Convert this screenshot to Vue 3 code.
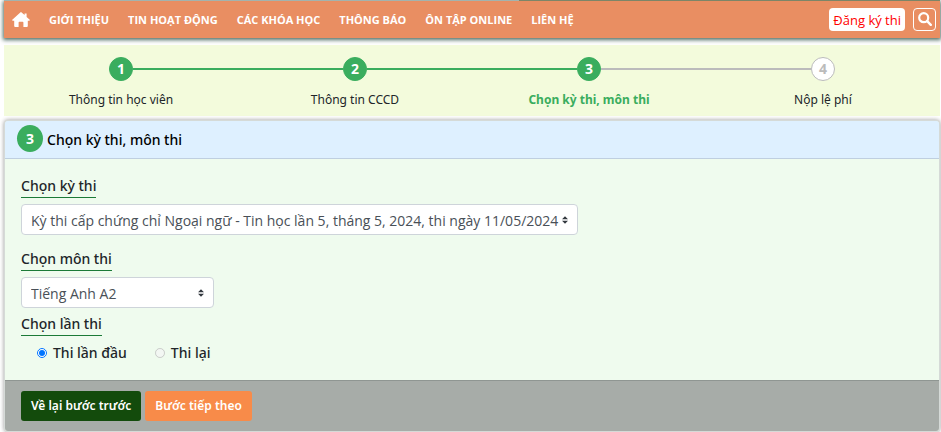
<script setup>
import { ref } from 'vue'

const links = ['GIỚI THIỆU', 'TIN HOẠT ĐỘNG', 'CÁC KHÓA HỌC', 'THÔNG BÁO', 'ÔN TẬP ONLINE', 'LIÊN HỆ']

const steps = [
  { label: 'Thông tin học viên', state: 'done' },
  { label: 'Thông tin CCCD', state: 'done' },
  { label: 'Chọn kỳ thi, môn thi', state: 'current' },
  { label: 'Nộp lệ phí', state: 'todo' },
]

const exams = ['Kỳ thi cấp chứng chỉ Ngoại ngữ - Tin học lần 5, tháng 5, 2024, thi ngày 11/05/2024']
const subjects = ['Tiếng Anh A2']
const exam = ref(exams[0])
const subject = ref(subjects[0])
const attempt = ref('first')
</script>

<template>
  <div class="page">
    <div class="banner"><span class="banner-photo"></span></div>

    <nav class="navbar">
      <a class="home" href="#" aria-label="Trang chủ">
        <svg viewBox="0 0 18 15" width="18" height="15" aria-hidden="true">
          <path fill="#fff" d="M9 0 L12.6 3.1 V1.6 H14.6 V4.9 L18 8 L17.3 8.8 H15.8 V14 Q15.8 15 14.8 15 H11.4 V10.6 Q11.4 9.8 10.6 9.8 H7.4 Q6.6 9.8 6.6 10.6 V15 H3.2 Q2.2 15 2.2 14 V8.8 H.7 L0 8 L8.3 .4 Q8.7 0 9 0 Z" />
        </svg>
      </a>
      <a v-for="link in links" :key="link" class="nav-link" href="#">{{ link }}</a>
      <a class="register" href="#">Đăng ký thi</a>
      <button class="search" type="button" aria-label="Tìm kiếm">
        <svg viewBox="0 0 14 14" width="14" height="14" aria-hidden="true">
          <circle cx="5.7" cy="5.7" r="4.5" fill="none" stroke="#fff" stroke-width="2.2" />
          <path d="M9.2 9.2 L12.8 12.8" stroke="#fff" stroke-width="2.4" stroke-linecap="round" />
        </svg>
      </button>
    </nav>

    <ol class="steps">
      <li v-for="(step, i) in steps" :key="step.label" class="step" :class="step.state">
        <div class="track">
          <span class="line"></span>
          <span class="dot">{{ i + 1 }}</span>
          <span class="line"></span>
        </div>
        <span class="step-label">{{ step.label }}</span>
      </li>
    </ol>

    <form class="card" @submit.prevent>
      <header class="card-header">
        <span class="badge">3</span>
        <h1 class="title">Chọn kỳ thi, môn thi</h1>
      </header>

      <div class="card-body">
        <label class="field-label" for="exam">Chọn kỳ thi</label>
        <select id="exam" v-model="exam" class="select exam">
          <option v-for="item in exams" :key="item">{{ item }}</option>
        </select>

        <label class="field-label" for="subject">Chọn môn thi</label>
        <select id="subject" v-model="subject" class="select subject">
          <option v-for="item in subjects" :key="item">{{ item }}</option>
        </select>

        <span id="attempt-label" class="field-label">Chọn lần thi</span>
        <div class="radios" role="radiogroup" aria-labelledby="attempt-label">
          <label class="radio"><input v-model="attempt" type="radio" name="attempt" value="first">Thi lần đầu</label>
          <label class="radio"><input v-model="attempt" type="radio" name="attempt" value="retake" disabled>Thi lại</label>
        </div>
      </div>

      <footer class="card-footer">
        <button class="btn back" type="button">Về lại bước trước</button>
        <button class="btn next" type="submit">Bước tiếp theo</button>
      </footer>
    </form>
  </div>
</template>

<style>
body {
  background: #fff;
  overflow-x: hidden;
}
</style>

<style scoped>
.page {
  padding: 0 1px 0 4px;
  font-family: "Open Sans", "Noto Sans", sans-serif;
  font-size: 14px;
  line-height: 20px;
  color: #212529;
}

.banner {
  position: relative;
  z-index: 1;
  display: flex;
  justify-content: flex-end;
  height: 1px;
  background: #a3b3ae;
}

.banner-photo {
  width: 45%;
  background: #7c8568;
}

.navbar {
  display: flex;
  align-items: center;
  height: 37px;
  padding: 0 4px 0 8px;
  background: #e98e62;
  box-shadow: 0 1px 4px 1px #4f6e64;
}

.home {
  display: flex;
  margin-right: 9px;
}

.nav-link {
  padding: 0 9px 0 10px;
  font-size: 11px;
  font-weight: 700;
  color: #fff;
  text-decoration: none;
  white-space: nowrap;
}

.register {
  margin-left: auto;
  margin-right: 8px;
  padding: 1px 4px 0;
  border-radius: 4px;
  background: #fff;
  color: #f00;
  font-size: 13px;
  line-height: 22px;
  text-decoration: none;
}

.search {
  display: flex;
  justify-content: center;
  width: 23px;
  height: 23px;
  padding: 3px 0 0;
  border: 1px solid #fff;
  border-radius: 4px;
  background: transparent;
}

.steps {
  display: flex;
  margin: 7px 0 4px;
  padding: 12px 0 6px;
  background: #f3fbdc;
  list-style: none;
}

.step {
  flex: 1;
  text-align: center;
}

.track {
  display: flex;
  align-items: center;
}

.line {
  flex: 1;
  height: 2px;
  background: #3aad5e;
}

.step:first-child .line:first-child,
.step:last-child .line:last-child {
  background: transparent;
}

.current .line:last-child,
.todo .line {
  background: #bbb;
}

.dot {
  box-sizing: border-box;
  width: 24px;
  height: 24px;
  border: 1px solid #3aad5e;
  border-radius: 50%;
  background: #3aad5e;
  color: #fff;
  font-weight: 700;
  line-height: 22px;
}

.todo .dot {
  border-color: #bbb;
  background: #fff;
  color: #bbb;
}

.step-label {
  display: block;
  margin-top: 9px;
  font-family: "Noto Sans", "Open Sans", sans-serif;
  font-size: 12px;
  line-height: 20px;
}

.current .step-label {
  color: #3aad5e;
  font-weight: 700;
}

.card {
  border: 1px solid #d5dad7;
  border-radius: 4px;
  overflow: hidden;
  background: #effbee;
  box-shadow: 0 0 4px #999;
}

.card-header {
  display: flex;
  align-items: center;
  gap: 4px;
  padding: 4px 12px 6px;
  border-bottom: 1px solid #bfcfe0;
  background: #def0ff;
}

.badge {
  width: 26px;
  border-radius: 50%;
  background: #3aad5e;
  color: #fff;
  font-weight: 700;
  line-height: 27px;
  text-align: center;
}

.title {
  margin: 0;
  padding-top: 2px;
  color: #000;
  font-family: "Noto Sans", "Open Sans", sans-serif;
  font-size: 14px;
  font-weight: 500;
}

.card-body {
  display: flex;
  flex-direction: column;
  align-items: flex-start;
  padding: 18px 16px 17px;
}

.field-label {
  padding-bottom: 2px;
  border-bottom: 1px solid #1b7a37;
  font-family: "Noto Sans", "Open Sans", sans-serif;
  font-weight: 500;
  line-height: 18px;
}

.select {
  box-sizing: border-box;
  height: 31px;
  margin: 6px 0 15px;
  padding: 2px 18px 0 9px;
  border: 1px solid #ced4da;
  border-radius: 4px;
  appearance: none;
  background: #fff url("data:image/svg+xml,%3csvg xmlns='http://www.w3.org/2000/svg' viewBox='0 0 4 5'%3e%3cpath fill='%23343a40' d='M2 0L0 2h4zm0 5L0 3h4z'/%3e%3c/svg%3e") no-repeat right 9px center / 6px 8px;
  color: #495057;
  font: inherit;
}

.subject {
  width: 193px;
  margin-bottom: 7px;
}

.radios {
  display: flex;
  gap: 28px;
  padding: 7px 16px 0;
}

.radio {
  display: flex;
  align-items: center;
  gap: 6px;
  font-family: "Noto Sans", "Open Sans", sans-serif;
  font-weight: 500;
}

.radio input {
  width: 10px;
  height: 10px;
  margin: 0;
}

.card-footer {
  display: flex;
  gap: 4px;
  padding: 10px 16px;
  border-top: 1px solid #8f9692;
  background: #a7aca8;
}

.btn {
  padding: 0 10px;
  border: 0;
  border-radius: 3px;
  color: #fff;
  font-family: "Noto Sans", "Open Sans", sans-serif;
  font-size: 12px;
  font-weight: 600;
  line-height: 30px;
}

.back {
  background: #134b0c;
}

.next {
  background: #f88b49;
}
</style>
